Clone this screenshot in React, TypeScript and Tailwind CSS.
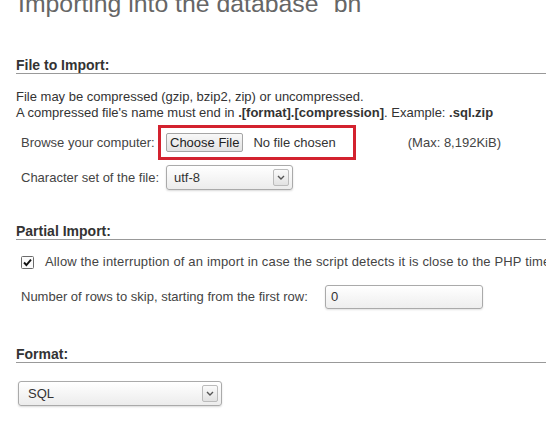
import { ReactNode } from "react";

function SectionTitle({ children, className = "" }: { children: ReactNode; className?: string }) {
  return (
    <h2 className={`text-[14px] leading-[16px] font-bold text-[#333] border-b border-[#999] whitespace-nowrap ${className}`}>
      {children}
    </h2>
  );
}

function FakeSelect({ value, className = "" }: { value: string; className?: string }) {
  return (
    <div
      className={`flex items-center justify-between h-[25px] border border-[#aaa] rounded-[3px] bg-linear-to-b from-white to-[#ececec] shadow-[0_1px_2px_rgba(0,0,0,0.15)] ${className}`}
    >
      <span className="text-[13px] text-[#333]">{value}</span>
      <span className="flex items-center justify-center w-[16px] h-[17px] mr-[3px] border border-[#bbb] rounded-[2px] bg-linear-to-b from-[#fafafa] to-[#e2e2e2]">
        <svg width="8" height="5" viewBox="0 0 8 5">
          <path d="M1 1 L4 4 L7 1" fill="none" stroke="#555" strokeWidth="1.4" />
        </svg>
      </span>
    </div>
  );
}

export default function App() {
  return (
    <div className="w-[546px] h-[435px] overflow-hidden bg-white font-['Liberation_Sans',Arial,sans-serif] text-[13px] text-[#333]">
      <h1 className="-mt-[10px] ml-[18px] text-[24.8px] leading-[28px] text-[#666] whitespace-nowrap">
        Importing into the database `bn`
      </h1>

      <div className="ml-[16px] w-[560px]">
        {/* File to Import */}
        <SectionTitle className="mt-[39px]">File to Import:</SectionTitle>
        <div className="mt-[15px] leading-[16px] whitespace-nowrap">
          <div>File may be compressed (gzip, bzip2, zip) or uncompressed.</div>
          <div>
            A compressed file's name must end in <b>.[format].[compression]</b>. Example: <b>.sql.zip</b>
          </div>
        </div>

        <div className="mt-[4px] flex items-center h-[35px] pl-[5px] text-[#444] whitespace-nowrap">
          <span className="w-[145px]">Browse your computer:</span>
          <div className="relative flex items-center self-stretch">
            <button className="h-[19px] px-[3px] border border-[#a5a5a5] rounded-[2px] bg-linear-to-b from-[#f8f8f8] to-[#e2e2e2] text-[13px] leading-[16px] text-[#222]">
              Choose File
            </button>
            <span className="ml-[10px] text-[#333]">No file chosen</span>
            <div className="absolute -left-[8px] top-0 w-[198px] h-[35px] border-[3px] border-[#d3222f]" />
          </div>
          <span className="ml-[72px] text-[#444]">(Max: 8,192KiB)</span>
        </div>

        <div className="mt-[5px] flex items-center pl-[5px] text-[#444] whitespace-nowrap">
          <span className="w-[145px]">Character set of the file:</span>
          <FakeSelect value="utf-8" className="w-[127px] pl-[7px]" />
        </div>

        {/* Partial Import */}
        <SectionTitle className="mt-[33px]">Partial Import:</SectionTitle>
        <div className="mt-[14px] flex items-center h-[16px] pl-[5px] text-[#444] whitespace-nowrap">
          <svg width="13" height="13" viewBox="0 0 13 13" className="shrink-0">
            <rect x="0.5" y="0.5" width="12" height="12" rx="1" fill="#fbfbfb" stroke="#6b6b6b" />
            <path d="M3 6.5 L5.4 9 L10 3.6" fill="none" stroke="#111" strokeWidth="1.9" />
          </svg>
          <span className="ml-[11px] tracking-[0.15px]">
            Allow the interruption of an import in case the script detects it is close to the PHP timeout limit.
          </span>
        </div>

        <div className="mt-[15px] flex items-center pl-[5px] text-[#444] whitespace-nowrap">
          <span className="w-[304px]">Number of rows to skip, starting from the first row:</span>
          <div className="flex items-center w-[158px] h-[24px] pl-[5px] border border-[#aaa] rounded-[3px] bg-linear-to-b from-white to-[#eeeeee] shadow-[0_1px_2px_rgba(0,0,0,0.12)] text-[#333]">
            0
          </div>
        </div>

        {/* Format */}
        <SectionTitle className="mt-[37px]">Format:</SectionTitle>
        <div className="mt-[18px] pl-[2px]">
          <FakeSelect value="SQL" className="w-[204px] pl-[9px] h-[24px]" />
        </div>
      </div>
    </div>
  );
}
